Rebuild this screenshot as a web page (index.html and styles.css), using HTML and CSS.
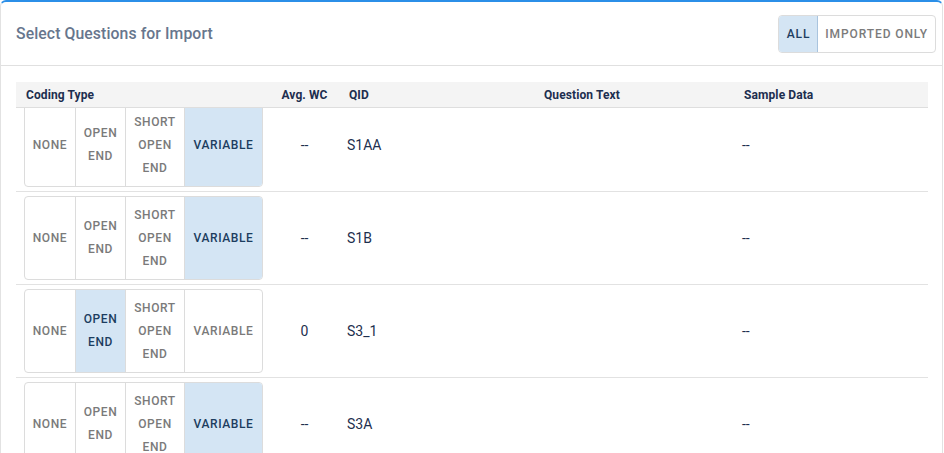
FILE: index.html
```html
<!DOCTYPE html>
<html>
<head>
<meta charset="utf-8">
<link rel="stylesheet" href="styles.css">
</head>
<body>
<div class="card">
  <div class="card-head">
    <h2 class="title">Select Questions for Import</h2>
    <div class="filter">
      <span class="fbtn active">ALL</span>
      <span class="fbtn">IMPORTED ONLY</span>
    </div>
  </div>
  <div class="table">
    <div class="thead">
      <div class="th">Coding Type</div>
      <div class="th center">Avg. WC</div>
      <div class="th">QID</div>
      <div class="th qt">Question Text</div>
      <div class="th">Sample Data</div>
    </div>
    <div class="tbody">
      <div class="tr first">
        <div class="td"><div class="seg"><span class="opt">NONE</span><span class="opt">OPEN<br>END</span><span class="opt">SHORT<br>OPEN<br>END</span><span class="opt on">VARIABLE</span></div></div>
        <div class="td center">--</div>
        <div class="td">S1AA</div>
        <div class="td"></div>
        <div class="td">--</div>
      </div>
      <div class="tr">
        <div class="td"><div class="seg"><span class="opt">NONE</span><span class="opt">OPEN<br>END</span><span class="opt">SHORT<br>OPEN<br>END</span><span class="opt on">VARIABLE</span></div></div>
        <div class="td center">--</div>
        <div class="td">S1B</div>
        <div class="td"></div>
        <div class="td">--</div>
      </div>
      <div class="tr">
        <div class="td"><div class="seg"><span class="opt">NONE</span><span class="opt on">OPEN<br>END</span><span class="opt">SHORT<br>OPEN<br>END</span><span class="opt">VARIABLE</span></div></div>
        <div class="td center">0</div>
        <div class="td">S3_1</div>
        <div class="td"></div>
        <div class="td">--</div>
      </div>
      <div class="tr">
        <div class="td"><div class="seg"><span class="opt">NONE</span><span class="opt">OPEN<br>END</span><span class="opt">SHORT<br>OPEN<br>END</span><span class="opt on">VARIABLE</span></div></div>
        <div class="td center">--</div>
        <div class="td">S3A</div>
        <div class="td"></div>
        <div class="td">--</div>
      </div>
    </div>
  </div>
</div>
</body>
</html>
```
FILE: styles.css
```css
* { box-sizing: border-box; }
html, body { margin: 0; padding: 0; background: #fff; }
body {
  font-family: Roboto, "Liberation Sans", sans-serif;
  width: 944px;
  height: 453px;
  overflow: hidden;
}
.card {
  width: 943px;
  height: 480px;
  border: 1px solid #e2e2e2;
  border-top: 2px solid #2b8fe8;
  border-radius: 6px;
  background: #fff;
}
.card-head {
  height: 64px;
  border-bottom: 1px solid #e0e0e0;
  display: flex;
  align-items: center;
  justify-content: space-between;
  padding: 0 6px 0 15px;
}
.title {
  margin: 0 0 1px 0;
  font-size: 15.75px;
  font-weight: 500;
  color: #67768d;
  letter-spacing: 0.1px;
}
.filter {
  display: flex;
  height: 38px;
  border: 1px solid #dcdcdc;
  border-radius: 4px;
  overflow: hidden;
  margin-top: 1px;
}
.fbtn {
  display: flex;
  align-items: center;
  padding: 0 7px;
  font-size: 12px;
  font-weight: 500;
  letter-spacing: 0.9px;
  color: #7b7b7b;
}
.fbtn.active {
  background: #d4e5f4;
  color: #1e3d60;
  border-right: 1px solid #a9c4de;
  padding: 0 7px 0 8px;
}
.table {
  margin: 16px 14px 0 15px;
}
.thead {
  display: grid;
  grid-template-columns: 254px 69px 195px 200px 194px;
  height: 26px;
  background: #f4f4f4;
  border-bottom: 1px solid #dedede;
  align-items: center;
}
.th {
  font-size: 12px;
  font-weight: 700;
  color: #1d2e4f;
  padding-left: 10px;
  letter-spacing: 0.1px;
}
.th.center { text-align: center; padding-left: 0; }
.tbody {
  height: 350px;
  overflow: hidden;
}
.tr {
  display: grid;
  grid-template-columns: 254px 69px 195px 200px 194px;
  align-items: center;
  border-bottom: 1px solid #e2e2e2;
  padding: 4px 0;
}
.tr.first { margin-top: -9px; }
.td {
  font-size: 14px;
  color: #1e2f4e;
  padding-left: 8px;
}
.td.center { text-align: center; padding-left: 0; }
.seg {
  display: inline-grid;
  grid-template-columns: 50px 50px 59px 78px;
  height: 84px;
  border: 1px solid #dcdcdc;
  border-radius: 4px;
  overflow: hidden;
}
.opt {
  display: flex;
  align-items: center;
  justify-content: center;
  text-align: center;
  font-size: 12px;
  font-weight: 500;
  letter-spacing: 0.6px;
  line-height: 23px;
  color: #7a7a7a;
  border-left: 1px solid #dcdcdc;
}
.opt:first-child { border-left: none; }
.opt.on {
  background: #d4e5f4;
  color: #1c3d5f;
}
```
